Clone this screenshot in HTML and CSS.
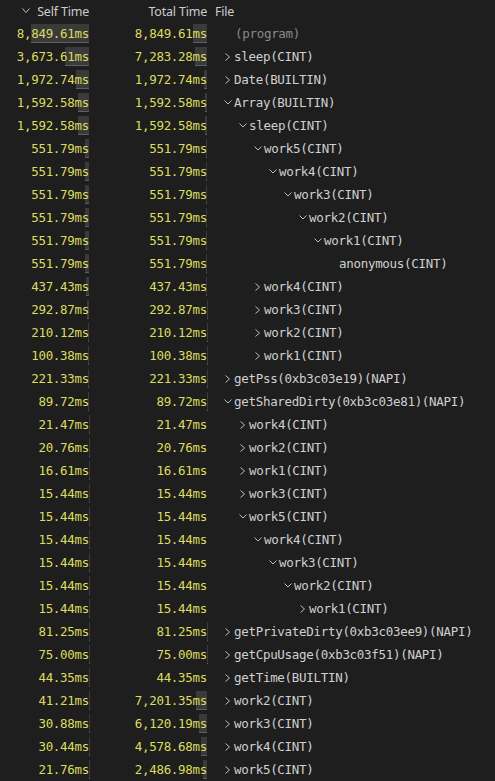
FILE: index.html
```html
<!DOCTYPE html>
<html>
<head>
<meta charset="utf-8">
<link rel="stylesheet" href="styles.css">
</head>
<body>
<div class="table">
  <div class="row head">
    <div class="hcell hself"><svg class="sort" width="8" height="6" viewBox="0 0 8 6"><polyline points="0.5,0.5 4,4.5 7.5,0.5"/></svg>Self Time</div>
    <div class="hcell htotal">Total Time</div>
    <div class="hcell hfile">File</div>
  </div>

  <div class="row"><div class="num"><span class="bar" style="width:58px"></span><span class="val">8,849.61ms</span></div><div class="num"><span class="bar" style="width:14px"></span><span class="val">8,849.61ms</span></div><div class="file d0"><span class="tog"></span><span class="name dim">(program)</span></div></div>

  <div class="row"><div class="num"><span class="bar" style="width:24px"></span><span class="val">3,673.61ms</span></div><div class="num"><span class="bar" style="width:12px"></span><span class="val">7,283.28ms</span></div><div class="file d0"><span class="tog"><svg viewBox="0 0 16 20"><polyline points="7.5,6.5 11.5,10 7.5,13.5"/></svg></span><span class="name">sleep(CINT)</span></div></div>

  <div class="row"><div class="num"><span class="bar" style="width:13px"></span><span class="val">1,972.74ms</span></div><div class="num"><span class="bar" style="width:3px"></span><span class="val">1,972.74ms</span></div><div class="file d0"><span class="tog"><svg viewBox="0 0 16 20"><polyline points="7.5,6.5 11.5,10 7.5,13.5"/></svg></span><span class="name">Date(BUILTIN)</span></div></div>

  <div class="row"><div class="num"><span class="bar" style="width:11px"></span><span class="val">1,592.58ms</span></div><div class="num"><span class="bar" style="width:2.5px"></span><span class="val">1,592.58ms</span></div><div class="file d0"><span class="tog"><svg viewBox="0 0 16 20"><polyline points="6.5,7.5 10,11 13.5,7.5"/></svg></span><span class="name">Array(BUILTIN)</span></div></div>

  <div class="row"><div class="num"><span class="bar" style="width:11px"></span><span class="val">1,592.58ms</span></div><div class="num"><span class="bar" style="width:2.5px"></span><span class="val">1,592.58ms</span></div><div class="file d1"><span class="tog"><svg viewBox="0 0 16 20"><polyline points="6.5,7.5 10,11 13.5,7.5"/></svg></span><span class="name">sleep(CINT)</span></div></div>

  <div class="row"><div class="num"><span class="bar" style="width:3.6px"></span><span class="val">551.79ms</span></div><div class="num"><span class="bar" style="width:0.9px"></span><span class="val">551.79ms</span></div><div class="file d2"><span class="tog"><svg viewBox="0 0 16 20"><polyline points="6.5,7.5 10,11 13.5,7.5"/></svg></span><span class="name">work5(CINT)</span></div></div>

  <div class="row"><div class="num"><span class="bar" style="width:3.6px"></span><span class="val">551.79ms</span></div><div class="num"><span class="bar" style="width:0.9px"></span><span class="val">551.79ms</span></div><div class="file d3"><span class="tog"><svg viewBox="0 0 16 20"><polyline points="6.5,7.5 10,11 13.5,7.5"/></svg></span><span class="name">work4(CINT)</span></div></div>

  <div class="row"><div class="num"><span class="bar" style="width:3.6px"></span><span class="val">551.79ms</span></div><div class="num"><span class="bar" style="width:0.9px"></span><span class="val">551.79ms</span></div><div class="file d4"><span class="tog"><svg viewBox="0 0 16 20"><polyline points="6.5,7.5 10,11 13.5,7.5"/></svg></span><span class="name">work3(CINT)</span></div></div>

  <div class="row"><div class="num"><span class="bar" style="width:3.6px"></span><span class="val">551.79ms</span></div><div class="num"><span class="bar" style="width:0.9px"></span><span class="val">551.79ms</span></div><div class="file d5"><span class="tog"><svg viewBox="0 0 16 20"><polyline points="6.5,7.5 10,11 13.5,7.5"/></svg></span><span class="name">work2(CINT)</span></div></div>

  <div class="row"><div class="num"><span class="bar" style="width:3.6px"></span><span class="val">551.79ms</span></div><div class="num"><span class="bar" style="width:0.9px"></span><span class="val">551.79ms</span></div><div class="file d6"><span class="tog"><svg viewBox="0 0 16 20"><polyline points="6.5,7.5 10,11 13.5,7.5"/></svg></span><span class="name">work1(CINT)</span></div></div>

  <div class="row"><div class="num"><span class="bar" style="width:3.6px"></span><span class="val">551.79ms</span></div><div class="num"><span class="bar" style="width:0.9px"></span><span class="val">551.79ms</span></div><div class="file d7"><span class="tog"></span><span class="name">anonymous(CINT)</span></div></div>

  <div class="row"><div class="num"><span class="bar" style="width:2.9px"></span><span class="val">437.43ms</span></div><div class="num"><span class="bar" style="width:0.7px"></span><span class="val">437.43ms</span></div><div class="file d2"><span class="tog"><svg viewBox="0 0 16 20"><polyline points="7.5,6.5 11.5,10 7.5,13.5"/></svg></span><span class="name">work4(CINT)</span></div></div>

  <div class="row"><div class="num"><span class="bar" style="width:1.9px"></span><span class="val">292.87ms</span></div><div class="num"><span class="bar" style="width:0.5px"></span><span class="val">292.87ms</span></div><div class="file d2"><span class="tog"><svg viewBox="0 0 16 20"><polyline points="7.5,6.5 11.5,10 7.5,13.5"/></svg></span><span class="name">work3(CINT)</span></div></div>

  <div class="row"><div class="num"><span class="bar" style="width:1.4px"></span><span class="val">210.12ms</span></div><div class="num"><span class="bar" style="width:0.3px"></span><span class="val">210.12ms</span></div><div class="file d2"><span class="tog"><svg viewBox="0 0 16 20"><polyline points="7.5,6.5 11.5,10 7.5,13.5"/></svg></span><span class="name">work2(CINT)</span></div></div>

  <div class="row"><div class="num"><span class="bar" style="width:0.7px"></span><span class="val">100.38ms</span></div><div class="num"><span class="bar" style="width:0.2px"></span><span class="val">100.38ms</span></div><div class="file d2"><span class="tog"><svg viewBox="0 0 16 20"><polyline points="7.5,6.5 11.5,10 7.5,13.5"/></svg></span><span class="name">work1(CINT)</span></div></div>

  <div class="row"><div class="num"><span class="bar" style="width:1.5px"></span><span class="val">221.33ms</span></div><div class="num"><span class="bar" style="width:0.35px"></span><span class="val">221.33ms</span></div><div class="file d0"><span class="tog"><svg viewBox="0 0 16 20"><polyline points="7.5,6.5 11.5,10 7.5,13.5"/></svg></span><span class="name">getPss(0xb3c03e19)(NAPI)</span></div></div>

  <div class="row"><div class="num"><span class="bar" style="width:0.6px"></span><span class="val">89.72ms</span></div><div class="num"><span class="bar" style="width:0.14px"></span><span class="val">89.72ms</span></div><div class="file d0"><span class="tog"><svg viewBox="0 0 16 20"><polyline points="6.5,7.5 10,11 13.5,7.5"/></svg></span><span class="name">getSharedDirty(0xb3c03e81)(NAPI)</span></div></div>

  <div class="row"><div class="num"><span class="bar" style="width:0.14px"></span><span class="val">21.47ms</span></div><div class="num"><span class="bar" style="width:0.03px"></span><span class="val">21.47ms</span></div><div class="file d1"><span class="tog"><svg viewBox="0 0 16 20"><polyline points="7.5,6.5 11.5,10 7.5,13.5"/></svg></span><span class="name">work4(CINT)</span></div></div>

  <div class="row"><div class="num"><span class="bar" style="width:0.14px"></span><span class="val">20.76ms</span></div><div class="num"><span class="bar" style="width:0.03px"></span><span class="val">20.76ms</span></div><div class="file d1"><span class="tog"><svg viewBox="0 0 16 20"><polyline points="7.5,6.5 11.5,10 7.5,13.5"/></svg></span><span class="name">work2(CINT)</span></div></div>

  <div class="row"><div class="num"><span class="bar" style="width:0.11px"></span><span class="val">16.61ms</span></div><div class="num"><span class="bar" style="width:0.03px"></span><span class="val">16.61ms</span></div><div class="file d1"><span class="tog"><svg viewBox="0 0 16 20"><polyline points="7.5,6.5 11.5,10 7.5,13.5"/></svg></span><span class="name">work1(CINT)</span></div></div>

  <div class="row"><div class="num"><span class="bar" style="width:0.1px"></span><span class="val">15.44ms</span></div><div class="num"><span class="bar" style="width:0.02px"></span><span class="val">15.44ms</span></div><div class="file d1"><span class="tog"><svg viewBox="0 0 16 20"><polyline points="7.5,6.5 11.5,10 7.5,13.5"/></svg></span><span class="name">work3(CINT)</span></div></div>

  <div class="row"><div class="num"><span class="bar" style="width:0.1px"></span><span class="val">15.44ms</span></div><div class="num"><span class="bar" style="width:0.02px"></span><span class="val">15.44ms</span></div><div class="file d1"><span class="tog"><svg viewBox="0 0 16 20"><polyline points="6.5,7.5 10,11 13.5,7.5"/></svg></span><span class="name">work5(CINT)</span></div></div>

  <div class="row"><div class="num"><span class="bar" style="width:0.1px"></span><span class="val">15.44ms</span></div><div class="num"><span class="bar" style="width:0.02px"></span><span class="val">15.44ms</span></div><div class="file d2"><span class="tog"><svg viewBox="0 0 16 20"><polyline points="6.5,7.5 10,11 13.5,7.5"/></svg></span><span class="name">work4(CINT)</span></div></div>

  <div class="row"><div class="num"><span class="bar" style="width:0.1px"></span><span class="val">15.44ms</span></div><div class="num"><span class="bar" style="width:0.02px"></span><span class="val">15.44ms</span></div><div class="file d3"><span class="tog"><svg viewBox="0 0 16 20"><polyline points="6.5,7.5 10,11 13.5,7.5"/></svg></span><span class="name">work3(CINT)</span></div></div>

  <div class="row"><div class="num"><span class="bar" style="width:0.1px"></span><span class="val">15.44ms</span></div><div class="num"><span class="bar" style="width:0.02px"></span><span class="val">15.44ms</span></div><div class="file d4"><span class="tog"><svg viewBox="0 0 16 20"><polyline points="6.5,7.5 10,11 13.5,7.5"/></svg></span><span class="name">work2(CINT)</span></div></div>

  <div class="row"><div class="num"><span class="bar" style="width:0.1px"></span><span class="val">15.44ms</span></div><div class="num"><span class="bar" style="width:0.02px"></span><span class="val">15.44ms</span></div><div class="file d5"><span class="tog"><svg viewBox="0 0 16 20"><polyline points="7.5,6.5 11.5,10 7.5,13.5"/></svg></span><span class="name">work1(CINT)</span></div></div>

  <div class="row"><div class="num"><span class="bar" style="width:0.5px"></span><span class="val">81.25ms</span></div><div class="num"><span class="bar" style="width:0.13px"></span><span class="val">81.25ms</span></div><div class="file d0"><span class="tog"><svg viewBox="0 0 16 20"><polyline points="7.5,6.5 11.5,10 7.5,13.5"/></svg></span><span class="name">getPrivateDirty(0xb3c03ee9)(NAPI)</span></div></div>

  <div class="row"><div class="num"><span class="bar" style="width:0.5px"></span><span class="val">75.00ms</span></div><div class="num"><span class="bar" style="width:0.12px"></span><span class="val">75.00ms</span></div><div class="file d0"><span class="tog"><svg viewBox="0 0 16 20"><polyline points="7.5,6.5 11.5,10 7.5,13.5"/></svg></span><span class="name">getCpuUsage(0xb3c03f51)(NAPI)</span></div></div>

  <div class="row"><div class="num"><span class="bar" style="width:0.3px"></span><span class="val">44.35ms</span></div><div class="num"><span class="bar" style="width:0.07px"></span><span class="val">44.35ms</span></div><div class="file d0"><span class="tog"><svg viewBox="0 0 16 20"><polyline points="7.5,6.5 11.5,10 7.5,13.5"/></svg></span><span class="name">getTime(BUILTIN)</span></div></div>

  <div class="row"><div class="num"><span class="bar" style="width:0.27px"></span><span class="val">41.21ms</span></div><div class="num"><span class="bar" style="width:11px"></span><span class="val">7,201.35ms</span></div><div class="file d0"><span class="tog"><svg viewBox="0 0 16 20"><polyline points="7.5,6.5 11.5,10 7.5,13.5"/></svg></span><span class="name">work2(CINT)</span></div></div>

  <div class="row"><div class="num"><span class="bar" style="width:0.2px"></span><span class="val">30.88ms</span></div><div class="num"><span class="bar" style="width:8.5px"></span><span class="val">6,120.19ms</span></div><div class="file d0"><span class="tog"><svg viewBox="0 0 16 20"><polyline points="7.5,6.5 11.5,10 7.5,13.5"/></svg></span><span class="name">work3(CINT)</span></div></div>

  <div class="row"><div class="num"><span class="bar" style="width:0.2px"></span><span class="val">30.44ms</span></div><div class="num"><span class="bar" style="width:6.5px"></span><span class="val">4,578.68ms</span></div><div class="file d0"><span class="tog"><svg viewBox="0 0 16 20"><polyline points="7.5,6.5 11.5,10 7.5,13.5"/></svg></span><span class="name">work4(CINT)</span></div></div>

  <div class="row"><div class="num"><span class="bar" style="width:0.14px"></span><span class="val">21.76ms</span></div><div class="num"><span class="bar" style="width:4px"></span><span class="val">2,486.98ms</span></div><div class="file d0"><span class="tog"><svg viewBox="0 0 16 20"><polyline points="7.5,6.5 11.5,10 7.5,13.5"/></svg></span><span class="name">work5(CINT)</span></div></div>
</div>
</body>
</html>
```
FILE: styles.css
```css
html, body {
  margin: 0;
  padding: 0;
  background: #1e1e1e;
  width: 495px;
  height: 781px;
  overflow: hidden;
}

.table {
  display: flex;
  flex-direction: column;
}

.row {
  display: grid;
  grid-template-columns: 92px 118px 1fr;
  height: 23px;
  font-family: "DejaVu Sans Mono", "Liberation Mono", monospace;
  font-size: 12.5px;
  letter-spacing: -0.3px;
  line-height: 20px;
  white-space: nowrap;
}

.head {
  height: 22px;
  font-family: "Noto Sans", "Open Sans", sans-serif;
  font-size: 12.5px;
  letter-spacing: -0.2px;
  line-height: 22px;
  color: #cccccc;
}

.hcell {
  padding-top: 1px;
}

.hself {
  display: flex;
  align-items: center;
  justify-content: flex-end;
  padding-right: 3px;
}

.htotal {
  text-align: right;
  padding-right: 3px;
}

.hfile {
  padding-left: 5px;
}

.sort {
  margin-right: 7px;
  margin-top: -3px;
}

.sort polyline {
  fill: none;
  stroke: #bdbdbd;
  stroke-width: 1;
}

.num {
  position: relative;
  text-align: right;
  padding-right: 3px;
  padding-top: 2px;
  color: #dcdc5e;
}

.bar {
  position: absolute;
  right: 3px;
  top: 2px;
  height: 18px;
  background: #3a3a3a;
  border-bottom: 1px solid #5e5e5e;
}

.val {
  position: relative;
}

.file {
  display: flex;
  align-items: flex-start;
  padding-left: 8px;
  padding-top: 2px;
  color: #d0d0d0;
}

.d1 { padding-left: 23px; }
.d2 { padding-left: 38px; }
.d3 { padding-left: 53px; }
.d4 { padding-left: 68px; }
.d5 { padding-left: 83px; }
.d6 { padding-left: 98px; }
.d7 { padding-left: 113px; }

.tog {
  flex: none;
  width: 16px;
  height: 20px;
}

.tog svg {
  display: block;
  width: 16px;
  height: 20px;
}

.tog polyline {
  fill: none;
  stroke: #bbbbbb;
  stroke-width: 1;
}

.name.dim {
  color: #8a8a8a;
  padding-left: 1px;
}
```
